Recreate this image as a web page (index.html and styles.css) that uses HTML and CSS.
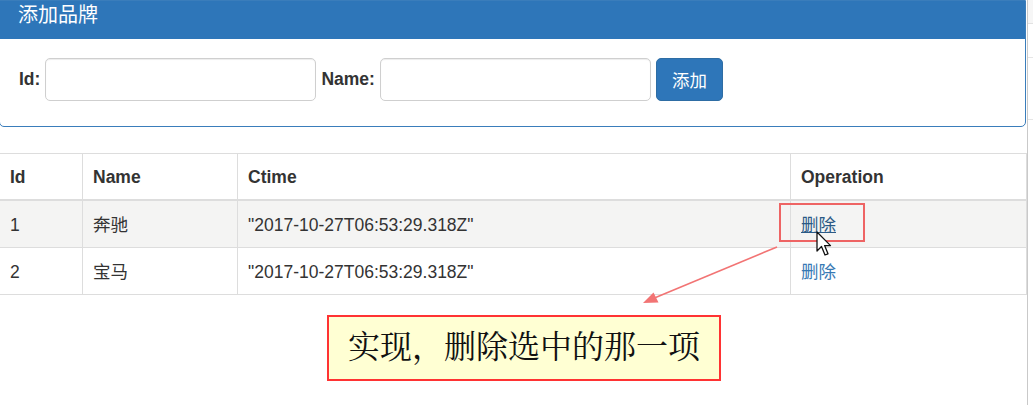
FILE: index.html
```html
<!DOCTYPE html>
<html lang="zh-CN">
<head>
<meta charset="utf-8">
<title>添加品牌</title>
<link rel="stylesheet" href="styles.css">
</head>
<body>
<div class="page">
  <main class="content">
    <section class="panel">
      <div class="panel-heading"><h3 class="panel-title">添加品牌</h3></div>
      <div class="panel-body">
        <label class="lbl">Id:</label>
        <input class="form-control" type="text">
        <label class="lbl">Name:</label>
        <input class="form-control" type="text">
        <button class="btn" type="button">添加</button>
      </div>
    </section>

    <table class="grid">
      <colgroup>
        <col class="c-id"><col class="c-name"><col class="c-time"><col class="c-op">
      </colgroup>
      <thead>
        <tr><th>Id</th><th>Name</th><th>Ctime</th><th>Operation</th></tr>
      </thead>
      <tbody>
        <tr class="hover"><td>1</td><td>奔驰</td><td>"2017-10-27T06:53:29.318Z"</td><td><a class="link link-hover" href="#">删除</a></td></tr>
        <tr><td>2</td><td>宝马</td><td>"2017-10-27T06:53:29.318Z"</td><td><a class="link" href="#">删除</a></td></tr>
      </tbody>
    </table>

    <div class="mark-box"></div>
    <svg class="arrow" width="1026" height="405" viewBox="0 0 1026 405">
      <line x1="777" y1="247" x2="652" y2="299" stroke="#f27474" stroke-width="1.6"/>
      <polygon points="643,303 658.5,302.5 653.5,292.5" fill="#f27474"/>
    </svg>
    <svg class="cursor" width="17" height="26" viewBox="0 0 17 26">
      <path d="M1 1 L1 20 L5.5 15.5 L9 24 L12 22.8 L8.6 14.6 L14.5 14.6 Z" fill="#ffffff" stroke="#111111" stroke-width="1.3" stroke-linejoin="round"/>
    </svg>
    <div class="note">实现，删除选中的那一项</div>
  </main>
  <aside class="edge">
    <div class="edge-a"></div>
    <div class="edge-b"></div>
    <div class="edge-c"></div>
  </aside>
</div>
</body>
</html>
```

FILE: styles.css
```css
* { box-sizing: border-box; }

html, body {
  margin: 0;
  padding: 0;
  background: #ffffff;
}

body {
  font-family: "Liberation Sans", "Noto Sans CJK SC", sans-serif;
  font-size: 17.5px;
  line-height: 25px;
  color: #333333;
  width: 1033px;
  height: 405px;
  overflow: hidden;
}

.page {
  display: flex;
  width: 1033px;
  height: 405px;
}

.content {
  position: relative;
  width: 1027px;
  margin-left: -1px;
  flex: none;
}

.edge {
  flex: none;
  width: 6px;
  margin-left: 1px;
  border-left: 1px solid #c9c9c9;
  background: #ffffff;
}
.edge-a { height: 24px; border-bottom: 1px solid #e2e2e2; background: #f6f6f6; }
.edge-b { height: 34px; border-bottom: 1px solid #e6e6e6; }
.edge-c { height: 62px; border-bottom: 1px solid #e6e6e6; }

/* panel */
.panel {
  width: 1027px;
  border: 1px solid #3a7dbb;
  border-radius: 0 0 5px 5px;
  background: #ffffff;
}

.panel-heading {
  height: 38px;
  background: #2e76b9;
  padding: 2px 18px 0;
}

.panel-title {
  margin: 0;
  font-family: "Noto Sans CJK SC", "Liberation Sans", sans-serif;
  font-size: 20px;
  font-weight: normal;
  line-height: 22px;
  color: #ffffff;
}

.panel-body {
  display: flex;
  align-items: center;
  gap: 5px;
  padding: 19px 18px 25px 19px;
}

.lbl {
  font-weight: bold;
  color: #333333;
}

.form-control {
  width: 271px;
  height: 43px;
  border: 1px solid #cfcfcf;
  border-radius: 5px;
  box-shadow: inset 0 1px 1px rgba(0,0,0,0.075);
  background: #ffffff;
  font-size: 17.5px;
  padding: 7px 15px;
  margin: 0;
}

.btn {
  height: 43px;
  padding: 0 15px;
  border: 1px solid #2e6da4;
  border-radius: 5px;
  background: #2e76b9;
  color: #ffffff;
  font-family: "Noto Sans CJK SC", "Liberation Sans", sans-serif;
  font-size: 17.5px;
  line-height: 25px;
  margin: 0;
}

/* table */
.grid {
  margin-top: 26px;
  width: 1027px;
  border-collapse: collapse;
  table-layout: fixed;
  border: 1px solid #dddddd;
}

.c-id { width: 83px; }
.c-name { width: 155px; }
.c-time { width: 553px; }
.c-op { width: 236px; }

.grid th,
.grid td {
  border: 1px solid #dddddd;
  text-align: left;
  vertical-align: top;
  line-height: 25px;
}

.grid th {
  padding: 11px 10px 9px;
  font-weight: bold;
  border-bottom: 2px solid #dddddd;
  color: #333333;
}

.grid td {
  padding: 12px 10px 8px;
  height: 47px;
}

.grid tr.hover td {
  background: #f4f4f3;
}

.link {
  color: #3779b4;
  text-decoration: none;
}

.link-hover {
  color: #2b5a86;
  text-decoration: underline;
}

/* annotations */
.mark-box {
  position: absolute;
  left: 780px;
  top: 203px;
  width: 86px;
  height: 39px;
  border: 2px solid #ee6464;
}

.arrow {
  position: absolute;
  left: 1px;
  top: 0;
  pointer-events: none;
}

.cursor {
  position: absolute;
  left: 817px;
  top: 231px;
}

.note {
  position: absolute;
  left: 328px;
  top: 315px;
  width: 394px;
  height: 66px;
  border: 2px solid #ff3333;
  background: #ffffd3;
  color: #111111;
  font-family: "Noto Serif CJK SC", "AR PL UMing CN", "Noto Sans CJK SC", serif;
  font-size: 32px;
  line-height: 55px;
  text-align: center;
}
```
